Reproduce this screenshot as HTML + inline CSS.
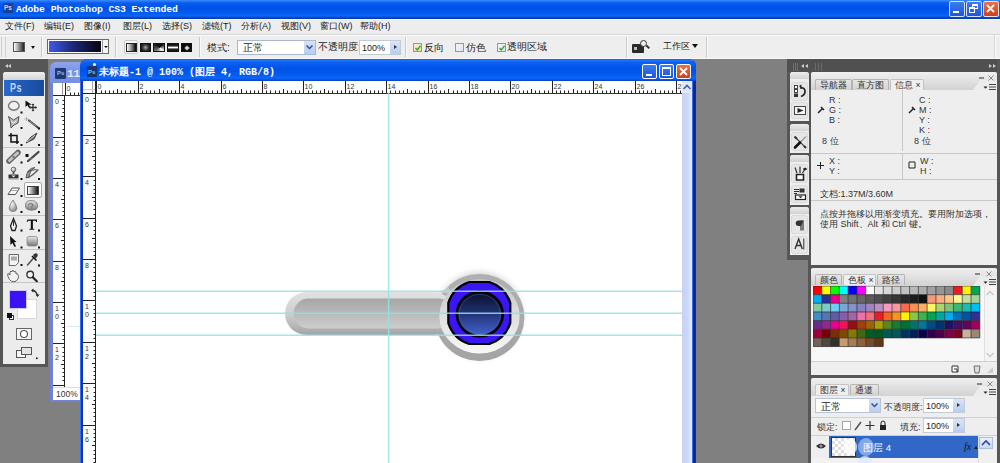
<!DOCTYPE html>
<html><head><meta charset="utf-8">
<style>
*{margin:0;padding:0;box-sizing:border-box}
html,body{width:1000px;height:463px;overflow:hidden;background:#808080;font-family:"Liberation Sans",sans-serif;font-size:10px;color:#222}
.a{position:absolute}
#title{left:0;top:0;width:1000px;height:19px;background:linear-gradient(#3d90ff 0,#2a7af8 1px,#0a5cf0 3px,#0052e6 8px,#0458ee 12px,#0a66f8 16px,#0850d8 17px,#0038a8 19px)}
#title .t{left:16px;top:4px;font:bold 9.8px "Liberation Mono",monospace;color:#fff;letter-spacing:-0.1px;white-space:pre}
#menu{left:0;top:19px;width:1000px;height:15px;background:#ededed;border-top:1px solid #f8f8ff}
#menu span{position:absolute;top:0;font-size:9px;color:#222;white-space:pre}
#opts{left:0;top:34px;width:1000px;height:25px;background:#eeeeee;border-top:1px solid #d6d6d6}
.sep{position:absolute;top:2px;width:2px;height:20px;border-left:1px solid #c8c8c8;border-right:1px solid #fafafa}

.tb{position:absolute;width:14px;height:14px}
.tri{position:absolute;width:0;height:0;border-left:2px solid transparent;border-top:2px solid transparent;border-right:2px solid #111;border-bottom:2px solid #111}

.rul text{font-family:"Liberation Sans",sans-serif;font-size:7px;fill:#333}

.tab{position:absolute;height:11px;border:1px solid #b4b4b4;border-bottom:none;border-radius:2px 2px 0 0;background:linear-gradient(#e6e6e6,#d2d2d2);font-size:8.6px;line-height:11px;color:#333;padding-left:4px;white-space:pre;overflow:hidden}
.tab.on{background:#efefef;border-color:#c4c4c4}
.pn{position:absolute;background:#eeeeee}
.ph{position:absolute;left:0;top:0;width:100%;height:18px;background:linear-gradient(#f0f0f0,#d2d2d2)}
.notch{position:absolute;right:0;top:8px;width:24px;height:10px;background:#ececec;clip-path:polygon(7px 0,100% 0,100% 100%,0 100%)}
.lbl{position:absolute;font-size:9px;color:#333;white-space:pre}
</style></head><body>
<!-- TITLE -->
<div id="title" class="a">
  <div class="a" style="left:3px;top:3px;width:10px;height:10px;background:#1d3f92;border-radius:1px"><span class="a" style="left:1px;top:1px;font:bold 6.5px 'Liberation Sans',sans-serif;color:#c4d6f8">Ps</span></div>
  <div class="a t">Adobe Photoshop CS3 Extended</div>
  <div class="a" style="left:949px;top:1px;width:16px;height:16px;border:1px solid #d4e0ff;border-radius:2px;background:linear-gradient(#3c7cf0,#1d55d8)"><div class="a" style="left:3px;top:9px;width:6px;height:2px;background:#fff"></div></div>
  <div class="a" style="left:966px;top:1px;width:16px;height:16px;border:1px solid #d4e0ff;border-radius:2px;background:linear-gradient(#3c7cf0,#1d55d8)"><div class="a" style="left:5px;top:2px;width:6px;height:5px;border:1px solid #fff;border-top-width:2px"></div><div class="a" style="left:2px;top:5px;width:6px;height:6px;border:1px solid #fff;border-top-width:2px;background:#2a62e0"></div></div>
  <div class="a" style="left:983px;top:1px;width:16px;height:16px;border:1px solid #f0e0e0;border-radius:2px;background:linear-gradient(#e8734e,#c9411f)"><svg class="a" style="left:2px;top:2px" width="9" height="9"><path d="M1 1L8 8M8 1L1 8" stroke="#fff" stroke-width="1.8"/></svg></div>
</div>
<!-- MENU -->
<div id="menu" class="a">
  <span style="left:5px">文件(F)</span>
  <span style="left:44px">编辑(E)</span>
  <span style="left:84px">图像(I)</span>
  <span style="left:123px">图层(L)</span>
  <span style="left:162px">选择(S)</span>
  <span style="left:202px">滤镜(T)</span>
  <span style="left:241px">分析(A)</span>
  <span style="left:281px">视图(V)</span>
  <span style="left:320px">窗口(W)</span>
  <span style="left:360px">帮助(H)</span>
</div>
<!-- OPTIONS -->
<div id="opts" class="a">
  <div class="a" style="left:0;top:0;width:1000px;height:1px;background:#fafafa"></div>
  <div class="a" style="left:994px;top:0;width:1px;height:24px;background:#d8d8d8"></div><div class="a" style="left:995px;top:0;width:1px;height:24px;background:#fafafa"></div>
  <div class="a" style="left:0;top:23px;width:1000px;height:1px;background:#f8f8f8"></div>
  <div class="a" style="left:1px;top:2px;width:5px;height:20px;border-left:1px solid #d0d0d0;border-right:1px solid #d0d0d0"></div>
  <div class="a" style="left:13px;top:7px;width:12px;height:10px;border:1px solid #555;background:linear-gradient(90deg,#fff,#222)"></div>
  <div class="a" style="left:31px;top:11px;width:0;height:0;border-left:2.5px solid transparent;border-right:2.5px solid transparent;border-top:3px solid #111"></div>
  <div class="sep" style="left:41px"></div>
  <div class="a" style="left:47px;top:4px;width:62px;height:15px;border:1px solid #6a6a6a;background:#fff">
    <div class="a" style="left:1px;top:1px;width:52px;height:11px;background:linear-gradient(90deg,#3c5ae8,#1a2570 50%,#05060e)"></div>
    <div class="a" style="left:54px;top:0;width:6px;height:13px;border-left:1px solid #999;background:#f4f4f4"><div class="a" style="left:1px;top:6px;width:0;height:0;border-left:2px solid transparent;border-right:2px solid transparent;border-top:2px solid #111"></div></div>
  </div>
  <div class="sep" style="left:115px"></div>
  <div class="a" style="left:124px;top:5px;width:14px;height:14px;border:1px solid #c8c8c8;border-radius:2px;background:#f8f8f8"></div>
  <div class="a" style="left:126px;top:8px;width:11px;height:9px;border:1px solid #222;background:linear-gradient(90deg,#fff,#888 50%,#000)"></div>
  <div class="a" style="left:140px;top:8px;width:11px;height:9px;border:1px solid #111;background:radial-gradient(circle,#aaa 0,#444 45%,#0a0a0a 90%)"></div>
  <div class="a" style="left:153px;top:8px;width:12px;height:9px;border:1px solid #111;background:conic-gradient(from 135deg at 55% 50%,#fff,#777 90deg,#111 180deg,#111 270deg,#fff)"></div>
  <div class="a" style="left:167px;top:8px;width:12px;height:9px;border:1px solid #111;background:linear-gradient(#111 0,#222 25%,#fff 50%,#222 75%,#111 100%)"></div>
  <div class="a" style="left:181px;top:8px;width:11px;height:9px;border:1px solid #111;background:#0a0a0a"><div class="a" style="left:3px;top:1.5px;width:4px;height:4px;transform:rotate(45deg);background:radial-gradient(circle,#fff,#777)"></div></div>
  <div class="sep" style="left:199px"></div>
  <span class="a" style="left:207px;top:6px;font-size:10px">模式:</span>
  <div class="a" style="left:237px;top:5px;width:79px;height:15px;border:1px solid #a9b8d2;background:#fff">
    <span class="a" style="left:5px;top:1px;font-size:9.5px">正常</span>
    <div class="a" style="right:0;top:0;width:11px;height:13px;background:linear-gradient(#d6e2f8,#b8cdf2)"><svg class="a" style="left:2px;top:4px" width="7" height="5"><path d="M0.5 0.5L3.5 3.5L6.5 0.5" stroke="#3a4f8a" stroke-width="1.5" fill="none"/></svg></div>
  </div>
  <span class="a" style="left:318px;top:6px;font-size:9.5px">不透明度:</span>
  <div class="a" style="left:359px;top:5px;width:42px;height:15px;border:1px solid #c3cad8;background:#fff">
    <span class="a" style="left:2px;top:2px;font-size:9px">100%</span>
    <div class="a" style="right:0;top:0;width:10px;height:13px;background:linear-gradient(#d9e4f8,#b9cdf0)"><div class="a" style="left:4px;top:4px;width:0;height:0;border-top:2.5px solid transparent;border-bottom:2.5px solid transparent;border-left:3px solid #333"></div></div>
  </div>
  <div class="sep" style="left:405px"></div>
  <div class="a" style="left:413px;top:8px;width:9px;height:9px;border:1px solid #8a9aae;background:linear-gradient(135deg,#f8f0d8,#e8d898)"><svg class="a" style="left:0;top:0" width="8" height="8"><path d="M1.5 4L3.3 6L6.5 1.8" stroke="#2aa52a" stroke-width="1.3" fill="none"/></svg></div>
  <span class="a" style="left:424px;top:6px;font-size:10px">反向</span>
  <div class="a" style="left:455px;top:8px;width:9px;height:9px;border:1px solid #8a9aae;background:linear-gradient(135deg,#f2f4f8,#dfe4ee)"></div>
  <span class="a" style="left:466px;top:6px;font-size:10px">仿色</span>
  <div class="a" style="left:497px;top:8px;width:9px;height:9px;border:1px solid #8a9aae;background:linear-gradient(135deg,#f2f4f8,#dfe4ee)"><svg class="a" style="left:0;top:0" width="8" height="8"><path d="M1.5 4L3.3 6L6.5 1.8" stroke="#2aa52a" stroke-width="1.3" fill="none"/></svg></div>
  <span class="a" style="left:507px;top:6px;font-size:9.6px">透明区域</span>
  <div class="sep" style="left:626px"></div>
  <div class="a" style="left:632px;top:9px;width:12px;height:9px;background:#2a2a2a;border-radius:1px"><div class="a" style="left:2px;top:3px;width:3px;height:3px;background:#bbb"></div></div>
  <div class="a" style="left:640px;top:5px;width:7px;height:7px;border:1.5px solid #333;border-radius:50%;background:#eee"></div>
  <div class="a" style="left:646px;top:11px;width:4px;height:1.5px;background:#333;transform:rotate(45deg)"></div>
  <span class="a" style="left:663px;top:5px;font-size:9px">工作区</span>
  <div class="a" style="left:692px;top:9px;width:0;height:0;border-left:3.5px solid transparent;border-right:3.5px solid transparent;border-top:4px solid #111"></div>
  <div class="sep" style="left:706px"></div>
</div>

<!-- LEFT DOCK -->
<div class="a" style="left:0;top:59px;width:48px;height:308px;background:#565656"></div>
<div class="a" style="left:5px;top:64px;width:0;height:0;border-top:2.5px solid transparent;border-bottom:2.5px solid transparent;border-right:3px solid #ccc"></div>
<div class="a" style="left:8px;top:64px;width:0;height:0;border-top:2.5px solid transparent;border-bottom:2.5px solid transparent;border-right:3px solid #ccc"></div>
<div class="a" style="left:3px;top:72px;width:42px;height:292px;background:#ececec;border-radius:3px 3px 0 0"></div>
<div class="a" style="left:3px;top:72px;width:42px;height:8px;background:linear-gradient(#f0f0f0,#d4d4d4);border-radius:3px 3px 0 0"></div>
<div class="a" style="left:4px;top:80px;width:40px;height:16px;background:linear-gradient(90deg,#2b6acb,#1d55ae 60%,#1a4c9c)">
  <span class="a" style="left:5.5px;top:0.5px;font:bold 12px 'Liberation Sans',sans-serif;color:#bcd6f2;transform:scaleX(0.75);transform-origin:0 0;letter-spacing:0.6px">Ps</span>
</div>
<!-- tool separators -->
<div class="a" style="left:3px;top:147px;width:42px;height:1px;background:#c4c4c4"></div>
<div class="a" style="left:3px;top:215px;width:42px;height:1px;background:#c4c4c4"></div>
<div class="a" style="left:3px;top:249px;width:42px;height:1px;background:#c4c4c4"></div>
<div class="a" style="left:3px;top:282px;width:42px;height:1px;background:#c4c4c4"></div>
<svg class="a" style="left:0;top:96px" width="48" height="268" viewBox="0 96 48 268">
 <defs>
  <linearGradient id="tg1" x1="0" y1="0" x2="1" y2="1"><stop offset="0" stop-color="#fff"/><stop offset="1" stop-color="#555"/></linearGradient>
  <linearGradient id="tg2" x1="0" y1="0" x2="0" y2="1"><stop offset="0" stop-color="#e8e8e8"/><stop offset="1" stop-color="#777"/></linearGradient>
  <radialGradient id="tg3" cx="0.35" cy="0.35" r="0.7"><stop offset="0" stop-color="#fafafa"/><stop offset="1" stop-color="#8a8a8a"/></radialGradient>
 </defs>
 <!-- ellipse marquee -->
 <ellipse cx="13.8" cy="105.8" rx="5.3" ry="4.4" fill="#f0f0f0" stroke="#777" stroke-width="1.4"/>
 <!-- move -->
 <path d="M25.5 100.5 L25.5 107 L27.5 105.3 L29 108 L30.3 107.3 L29 104.7 L31.8 104.7Z" fill="#111"/>
 <path d="M33 104v7M29.5 107.5h7" stroke="#333" stroke-width="1.3"/>
 <path d="M33 103.5l-1.5 1.5h3zM33 111.5l-1.5-1.5h3zM29 107.5l1.5-1.5v3zM37 107.5l-1.5-1.5v3z" fill="#333"/>
 <!-- lasso -->
 <path d="M8.5 116.5 L13.5 120 L19 116.5 L18 123 L14 125 L11 128 L10.5 123 Z" fill="#b8b8b8" stroke="#555" stroke-width="1"/>
 <path d="M11 121.5 L13.5 123 L16.5 121" stroke="#eee" stroke-width="1" fill="none"/>
 <!-- magic wand -->
 <path d="M29 120.5 L38.5 128" stroke="#444" stroke-width="2.2" stroke-linecap="round"/>
 <path d="M29.5 121 L36 126" stroke="#aaa" stroke-width="0.8"/>
 <path d="M26.5 117v4M24.5 119h4" stroke="#aaa" stroke-width="0.9"/>
 <!-- crop -->
 <path d="M11 133v9h8M8.5 135.5h8.5v8.5" stroke="#111" stroke-width="1.5" fill="none"/>
 <!-- slice -->
 <path d="M26 143 L31 137 L37 133 L34 139 Z" fill="#777" stroke="#333" stroke-width="0.9"/>
 <path d="M27 142 L35 135" stroke="#ddd" stroke-width="0.8"/>
 <!-- healing -->
 <path d="M9 161 L18 152.5" stroke="#666" stroke-width="5.5" stroke-linecap="round"/>
 <path d="M9.5 160.5 L17.5 153" stroke="#c4c4c4" stroke-width="3" stroke-linecap="round"/>
 <circle cx="13.5" cy="157" r="1.2" fill="#777"/>
 <!-- brush -->
 <rect x="25.5" y="154" width="3" height="3" fill="#111"/>
 <path d="M28 161 Q33 157 38.5 152" stroke="#444" stroke-width="2.2" fill="none" stroke-linecap="round"/>
 <path d="M29 158.5 Q31 160 33 158" stroke="#888" stroke-width="1" fill="none"/>
 <!-- stamp -->
 <circle cx="13.5" cy="169.5" r="2.3" fill="url(#tg3)" stroke="#555" stroke-width="0.8"/>
 <path d="M12.5 171.5h2v2.5h-2z" fill="#555"/>
 <path d="M8.5 174.5h10v3.5h-10z" fill="#333"/>
 <path d="M8.5 178h10v1.5h-10z" fill="#999"/>
 <path d="M11.5 175.5l2 2l2-2z" fill="#eee"/>
 <!-- history brush -->
 <path d="M26 178 Q27 168 35 167.5 Q30 170 29 177 Z" fill="#999" stroke="#444" stroke-width="0.8"/>
 <path d="M27.5 172 Q33 169 38 170 Q33 175 28 178" stroke="#555" stroke-width="1.1" fill="none"/>
 <!-- eraser -->
 <path d="M8 194.5 L12 188 H19.5 L15.5 194.5 Z" fill="#f6f6f6" stroke="#555" stroke-width="1"/>
 <path d="M8.5 194 L11 190.5 H18" stroke="#999" stroke-width="0.8" fill="none"/>
 <!-- blur drop -->
 <path d="M13 200 Q9 206 9.2 208.5 Q9.5 211.5 13 211.5 Q16.5 211.5 16.8 208.5 Q17 206 13 200Z" fill="url(#tg3)" stroke="#777" stroke-width="0.8"/>
 <!-- dodge / smudge cloud -->
 <path d="M25.5 206 Q25 201 30 200.5 Q35 200 37 203 Q39 207 36 209.5 Q31 211 27.5 209.5 Q25.5 208.5 25.5 206Z" fill="url(#tg2)" stroke="#777" stroke-width="0.8"/>
 <path d="M28 205 Q30 202.5 32.5 204 Q34 206.5 31 207" stroke="#666" stroke-width="0.9" fill="none"/>
 <!-- pen -->
 <path d="M13.5 218.5 L10.5 226 L12 230.5 H15 L16.5 226 Z" fill="#eee" stroke="#222" stroke-width="1.3"/>
 <path d="M13.5 221v5" stroke="#222" stroke-width="0.9"/>
 <!-- type T -->
 <path d="M27.5 219.5h9.5v2.5h-0.8l-0.7-1.3h-2.6v8h1.3v1h-4.7v-1h1.3v-8h-2.6l-0.7 1.3h-0.8z" fill="#111"/>
 <!-- path select -->
 <path d="M10 236 L10.5 245 L12.5 243 L14.5 247 L16 246.2 L14 242.3 L16.5 242 Z" fill="#111"/>
 <!-- shape -->
 <rect x="27" y="236.5" width="10.5" height="9.5" rx="2" fill="url(#tg2)" stroke="#888" stroke-width="0.8"/>
 <!-- notes -->
 <path d="M9.2 254.5 H18.5 V262.5 L15.5 265.5 H9.2 Z" fill="#f4f4f4" stroke="#666" stroke-width="1"/>
 <path d="M11 256.5h6v4h-6z" fill="#aaa"/>
 <!-- eyedropper -->
 <path d="M27.5 265 L34 257.5" stroke="#555" stroke-width="1.6" stroke-linecap="round"/>
 <path d="M33 255 Q35.5 252 37.5 254 Q38.5 256 35.5 258.5 Z" fill="#333"/>
 <path d="M32 256 L36.5 260.5" stroke="#111" stroke-width="1.6"/>
 <!-- hand -->
 <path d="M9.5 279.5 Q7 275.5 7.8 273.8 Q8.8 273 10 275 V271.8 Q11 270.5 12 271.8 V271 Q13 270 14 271 V272 Q15 271 16 272 V274 Q17 273.3 18 274.5 Q19 276 18 279 Q16.5 282 13 281.8 Q11 281.5 9.5 279.5Z" fill="#f2f2f2" stroke="#555" stroke-width="0.9"/>
 <!-- zoom -->
 <circle cx="30.2" cy="274.6" r="3.3" fill="#f4f4f4" stroke="#333" stroke-width="1.4"/>
 <path d="M32.8 277.2 L36.8 281.2" stroke="#222" stroke-width="2.2" stroke-linecap="round"/>
 <!-- quick mask & screen mode -->
 <rect x="16.5" y="328.5" width="15" height="11" fill="#f6f6f6" stroke="#666" stroke-width="1"/>
 <circle cx="24" cy="334" r="3.5" fill="#fff" stroke="#555" stroke-width="1.1"/>
 <rect x="16.5" y="350.5" width="9" height="7" fill="#f8f8f8" stroke="#555" stroke-width="1"/>
 <rect x="21.5" y="347.5" width="10" height="7" fill="#e4e4e4" stroke="#555" stroke-width="1"/>
 <g fill="#111">
  <rect x="20.5" y="111.5" width="2" height="2"/>
  <rect x="20.5" y="127" width="2" height="2"/><rect x="38" y="127.5" width="2" height="2"/>
  <rect x="20.5" y="144" width="2" height="2"/><rect x="38" y="144" width="2" height="2"/>
  <rect x="20.5" y="161.5" width="2" height="2"/><rect x="38" y="161.5" width="2" height="2"/>
  <rect x="20.5" y="178" width="2" height="2"/><rect x="38" y="178" width="2" height="2"/>
  <rect x="20.5" y="195" width="2" height="2"/><rect x="38.5" y="195" width="2" height="2"/>
  <rect x="20.5" y="211" width="2" height="2"/><rect x="38" y="211" width="2" height="2"/>
  <rect x="20.5" y="229.5" width="2" height="2"/><rect x="38" y="229.5" width="2" height="2"/>
  <rect x="20.5" y="246.5" width="2" height="2"/><rect x="38" y="246.5" width="2" height="2"/>
  <rect x="20.5" y="264" width="2" height="2"/><rect x="38" y="264.5" width="2" height="2"/>
  <rect x="36" y="357.5" width="1.6" height="1.6"/>
 </g>
</svg>
<!-- gradient tool selected -->
<div class="a" style="left:24px;top:182px;width:18px;height:16px;border:1px solid #a8a8a8;border-radius:2px;background:#fbfbfb"></div>
<div class="a" style="left:27px;top:186px;width:12px;height:9px;border:1px solid #444;background:linear-gradient(90deg,#fff,#111)"></div>
<!-- colors -->
<div class="a" style="left:17px;top:299px;width:20px;height:20px;background:#fff;border:1px solid #d8d8d8"></div>
<div class="a" style="left:9px;top:290px;width:18px;height:19px;background:#3b12f2;border:1px solid #cfc8ff"></div>
<div class="a" style="left:9px;top:315px;width:5px;height:5px;background:#fff;border:1px solid #333"></div>
<div class="a" style="left:7px;top:313px;width:5px;height:5px;background:#111"></div>
<svg class="a" style="left:30px;top:288px" width="10" height="10"><path d="M2.5 2.5 Q6 2.5 7.5 7.5" stroke="#333" stroke-width="1.3" fill="none"/><path d="M1 2.5 L3.5 0.5 V4.5Z M7.5 9 L5.5 6.5 H9.5Z" fill="#222"/></svg>

<!-- BACK WINDOW -->
<div class="a" style="left:50px;top:62px;width:39px;height:340px;background:#7282d8;border-radius:6px 6px 0 0"></div>
<div class="a" style="left:50px;top:62px;width:39px;height:21px;background:linear-gradient(#8ea4ec,#7d95e4 40%,#7890e2);border-radius:6px 6px 0 0"></div>
<div class="a" style="left:55px;top:68px;width:11px;height:11px;background:#1d3a78;border-radius:1px"><span class="a" style="left:2px;top:2px;font:bold 6px 'Liberation Sans';color:#9bb8e8">Ps</span></div>
<span class="a" style="left:67px;top:68px;font:bold 11px 'Liberation Mono',monospace;color:#dfe8ff">11</span>
<div class="a" style="left:53px;top:83px;width:30px;height:304px;background:#fff"></div>
<svg class="a rul" style="left:65px;top:83px" width="16" height="12"><path d="M0.5 0V12M5.5 9.5V12M9.5 9.5V12M13.5 9.5V12" stroke="#222" stroke-width="1"/><text x="1.5" y="8">0</text></svg>
<div class="a" style="left:53px;top:95px;width:28px;height:1px;background:#333"></div>
<div class="a" style="left:62px;top:83px;width:1px;height:12px;background:#999"></div>
<svg class="a rul" style="left:53px;top:95px" width="12" height="292"><path d="M0 0.5H12M9.5 5.5H12M9.5 9.5H12M9.5 13.5H12M9.5 17.5H12M8 21.5H12M9.5 25.5H12M9.5 29.5H12M9.5 34.5H12M9.5 38.5H12M0 42.5H12M9.5 46.5H12M9.5 50.5H12M9.5 54.5H12M9.5 58.5H12M8 62.5H12M9.5 67.5H12M9.5 71.5H12M9.5 75.5H12M9.5 79.5H12M0 83.5H12M9.5 87.5H12M9.5 91.5H12M9.5 95.5H12M9.5 100.5H12M8 104.5H12M9.5 108.5H12M9.5 112.5H12M9.5 116.5H12M9.5 120.5H12M0 124.5H12M9.5 129.5H12M9.5 133.5H12M9.5 137.5H12M9.5 141.5H12M8 145.5H12M9.5 149.5H12M9.5 153.5H12M9.5 157.5H12M9.5 162.5H12M0 166.5H12M9.5 170.5H12M9.5 174.5H12M9.5 178.5H12M9.5 182.5H12M8 186.5H12M9.5 190.5H12M9.5 195.5H12M9.5 199.5H12M9.5 203.5H12M0 207.5H12M9.5 211.5H12M9.5 215.5H12M9.5 219.5H12M9.5 224.5H12M8 228.5H12M9.5 232.5H12M9.5 236.5H12M9.5 240.5H12M9.5 244.5H12M0 248.5H12M9.5 252.5H12M9.5 257.5H12M9.5 261.5H12M9.5 265.5H12M8 269.5H12M9.5 273.5H12M9.5 277.5H12M9.5 281.5H12M9.5 285.5H12M0 290.5H12" stroke="#222" stroke-width="1"/><text x="2" y="8.5">0</text><text x="2" y="50.5">2</text><text x="2" y="91.5">4</text><text x="2" y="132.5">6</text><text x="2" y="174.5">8</text><text x="2" y="215.5">1</text><text x="2" y="223.5">0</text><text x="2" y="256.5">1</text><text x="2" y="264.5">2</text><text x="2" y="298.5">1</text><text x="2" y="306.5">4</text></svg>
<div class="a" style="left:64px;top:95px;width:1px;height:292px;background:#222"></div>
<div class="a" style="left:53px;top:387px;width:30px;height:13px;background:#fff;border-top:1px solid #ddd"></div>
<span class="a" style="left:56px;top:389px;font-size:8.5px;color:#333">100%</span>

<!-- FRONT WINDOW -->
<div class="a" style="left:80px;top:59px;width:616px;height:420px;background:linear-gradient(90deg,#3a6ef0 0,#3a6ef0 1px,#0a36c8 1px,#0a36c8 3px,#6a9cf8 3px,#6a9cf8 4px,#0a40d8 4px,#0a40d8 611px,#d8f0ff 611px,#d8f0ff 612px,#3a70e8 612px,#3a70e8 613px,#0828a8 613px,#00208f 615px,#2a3a80 616px);border-radius:7px 7px 0 0"></div>
<div class="a" style="left:80px;top:59px;width:616px;height:22px;background:linear-gradient(#1a4cc8 0,#2a78f8 1px,#0a62f4 3px,#0052e6 10px,#0458ee 15px,#0a66f8 19px,#0850e0 21px,#0a3ab8 22px);border-radius:7px 7px 0 0"></div>
<div class="a" style="left:87px;top:66px;width:10px;height:11px;background:#17366e;border-radius:1px"><span class="a" style="left:1px;top:3px;font:bold 6px 'Liberation Sans';color:#9bb8e8">Ps</span></div>
<div class="a" style="left:93px;top:63px;width:3px;height:3px;background:#fff;border-radius:50%"></div>
<span class="a" style="left:99px;top:65px;font:bold 10px 'Liberation Mono',monospace;color:#fff;white-space:pre">未标题-1 @ 100% (图层 4, RGB/8)</span>
<div class="a" style="left:642px;top:64px;width:15px;height:15px;border:1px solid #fff;border-radius:2px;background:linear-gradient(#3c7cf0,#1d55d8)"><div class="a" style="left:3px;top:9px;width:6px;height:2px;background:#fff"></div></div>
<div class="a" style="left:659px;top:64px;width:15px;height:15px;border:1px solid #fff;border-radius:2px;background:linear-gradient(#3c7cf0,#1d55d8)"><div class="a" style="left:2px;top:2px;width:9px;height:9px;border:1px solid #fff;border-top-width:2px"></div></div>
<div class="a" style="left:676px;top:64px;width:15px;height:15px;border:1px solid #fff;border-radius:2px;background:linear-gradient(#e8734e,#c9411f)"><svg class="a" style="left:2px;top:2px" width="9" height="9"><path d="M1 1L8 8M8 1L1 8" stroke="#fff" stroke-width="1.8"/></svg></div>
<div class="a" style="left:83px;top:81px;width:599px;height:382px;background:#fff"></div>
<svg class="a rul" style="left:96px;top:81px" width="586" height="12"><path d="M0.5 0V12M5.5 9.5V12M9.5 9.5V12M13.5 9.5V12M17.5 9.5V12M21.5 8V12M25.5 9.5V12M29.5 9.5V12M34.5 9.5V12M38.5 9.5V12M42.5 0V12M46.5 9.5V12M50.5 9.5V12M54.5 9.5V12M58.5 9.5V12M63.5 8V12M67.5 9.5V12M71.5 9.5V12M75.5 9.5V12M79.5 9.5V12M83.5 0V12M87.5 9.5V12M92.5 9.5V12M96.5 9.5V12M100.5 9.5V12M104.5 8V12M108.5 9.5V12M112.5 9.5V12M116.5 9.5V12M121.5 9.5V12M125.5 0V12M129.5 9.5V12M133.5 9.5V12M137.5 9.5V12M141.5 9.5V12M145.5 8V12M150.5 9.5V12M154.5 9.5V12M158.5 9.5V12M162.5 9.5V12M166.5 0V12M170.5 9.5V12M174.5 9.5V12M179.5 9.5V12M183.5 9.5V12M187.5 8V12M191.5 9.5V12M195.5 9.5V12M199.5 9.5V12M203.5 9.5V12M207.5 0V12M212.5 9.5V12M216.5 9.5V12M220.5 9.5V12M224.5 9.5V12M228.5 8V12M232.5 9.5V12M236.5 9.5V12M241.5 9.5V12M245.5 9.5V12M249.5 0V12M253.5 9.5V12M257.5 9.5V12M261.5 9.5V12M265.5 9.5V12M270.5 8V12M274.5 9.5V12M278.5 9.5V12M282.5 9.5V12M286.5 9.5V12M290.5 0V12M294.5 9.5V12M299.5 9.5V12M303.5 9.5V12M307.5 9.5V12M311.5 8V12M315.5 9.5V12M319.5 9.5V12M323.5 9.5V12M328.5 9.5V12M332.5 0V12M336.5 9.5V12M340.5 9.5V12M344.5 9.5V12M348.5 9.5V12M352.5 8V12M357.5 9.5V12M361.5 9.5V12M365.5 9.5V12M369.5 9.5V12M373.5 0V12M377.5 9.5V12M381.5 9.5V12M386.5 9.5V12M390.5 9.5V12M394.5 8V12M398.5 9.5V12M402.5 9.5V12M406.5 9.5V12M410.5 9.5V12M414.5 0V12M419.5 9.5V12M423.5 9.5V12M427.5 9.5V12M431.5 9.5V12M435.5 8V12M439.5 9.5V12M443.5 9.5V12M448.5 9.5V12M452.5 9.5V12M456.5 0V12M460.5 9.5V12M464.5 9.5V12M468.5 9.5V12M472.5 9.5V12M477.5 8V12M481.5 9.5V12M485.5 9.5V12M489.5 9.5V12M493.5 9.5V12M497.5 0V12M501.5 9.5V12M506.5 9.5V12M510.5 9.5V12M514.5 9.5V12M518.5 8V12M522.5 9.5V12M526.5 9.5V12M530.5 9.5V12M535.5 9.5V12M539.5 0V12M543.5 9.5V12M547.5 9.5V12M551.5 9.5V12M555.5 9.5V12M559.5 8V12M564.5 9.5V12M568.5 9.5V12M572.5 9.5V12M576.5 9.5V12M580.5 0V12M584.5 9.5V12" stroke="#222" stroke-width="1"/><text x="1.5" y="8">0</text><text x="43.5" y="8">2</text><text x="84.5" y="8">4</text><text x="126.5" y="8">6</text><text x="167.5" y="8">8</text><text x="208.5" y="8">10</text><text x="250.5" y="8">12</text><text x="291.5" y="8">14</text><text x="333.5" y="8">16</text><text x="374.5" y="8">18</text><text x="415.5" y="8">20</text><text x="457.5" y="8">22</text><text x="498.5" y="8">24</text><text x="540.5" y="8">26</text><text x="581.5" y="8">28</text></svg>
<div class="a" style="left:83px;top:93px;width:599px;height:1px;background:#333"></div>
<div class="a" style="left:92px;top:81px;width:1px;height:12px;background:#aaa"></div>
<div class="a" style="left:83px;top:89px;width:13px;height:1px;background:#ccc"></div>
<svg class="a rul" style="left:83px;top:93px" width="13" height="371"><path d="M0 0.5H13M10.5 5.5H13M10.5 9.5H13M10.5 13.5H13M10.5 17.5H13M9 21.5H13M10.5 25.5H13M10.5 29.5H13M10.5 34.5H13M10.5 38.5H13M0 42.5H13M10.5 46.5H13M10.5 50.5H13M10.5 54.5H13M10.5 58.5H13M9 63.5H13M10.5 67.5H13M10.5 71.5H13M10.5 75.5H13M10.5 79.5H13M0 83.5H13M10.5 87.5H13M10.5 92.5H13M10.5 96.5H13M10.5 100.5H13M9 104.5H13M10.5 108.5H13M10.5 112.5H13M10.5 116.5H13M10.5 121.5H13M0 125.5H13M10.5 129.5H13M10.5 133.5H13M10.5 137.5H13M10.5 141.5H13M9 145.5H13M10.5 150.5H13M10.5 154.5H13M10.5 158.5H13M10.5 162.5H13M0 166.5H13M10.5 170.5H13M10.5 174.5H13M10.5 179.5H13M10.5 183.5H13M9 187.5H13M10.5 191.5H13M10.5 195.5H13M10.5 199.5H13M10.5 203.5H13M0 207.5H13M10.5 212.5H13M10.5 216.5H13M10.5 220.5H13M10.5 224.5H13M9 228.5H13M10.5 232.5H13M10.5 236.5H13M10.5 241.5H13M10.5 245.5H13M0 249.5H13M10.5 253.5H13M10.5 257.5H13M10.5 261.5H13M10.5 265.5H13M9 270.5H13M10.5 274.5H13M10.5 278.5H13M10.5 282.5H13M10.5 286.5H13M0 290.5H13M10.5 294.5H13M10.5 299.5H13M10.5 303.5H13M10.5 307.5H13M9 311.5H13M10.5 315.5H13M10.5 319.5H13M10.5 323.5H13M10.5 328.5H13M0 332.5H13M10.5 336.5H13M10.5 340.5H13M10.5 344.5H13M10.5 348.5H13M9 352.5H13M10.5 357.5H13M10.5 361.5H13M10.5 365.5H13M10.5 369.5H13" stroke="#222" stroke-width="1"/><text x="2" y="8.5">0</text><text x="2" y="50.5">2</text><text x="2" y="91.5">4</text><text x="2" y="133.5">6</text><text x="2" y="174.5">8</text><text x="2" y="215.5">1</text><text x="2" y="223.5">0</text><text x="2" y="257.5">1</text><text x="2" y="265.5">2</text><text x="2" y="298.5">1</text><text x="2" y="306.5">4</text><text x="2" y="340.5">1</text><text x="2" y="348.5">6</text></svg>
<div class="a" style="left:95px;top:81px;width:1px;height:382px;background:#222"></div>
<div class="a" style="left:682px;top:81px;width:10px;height:382px;background:linear-gradient(90deg,#c6d2f4,#cbd8f8 60%,#e4ecff)"></div>
<div class="a" style="left:682px;top:81px;width:10px;height:12px;background:#dfe8fc"></div>
<svg class="a" style="left:682px;top:81px" width="10" height="12"><path d="M1.5 8L5 4.5L8.5 8" stroke="#4a5e9a" stroke-width="1.6" fill="none"/></svg>


<!-- CANVAS CONTENT -->
<svg class="a" style="left:96px;top:93px" width="586" height="370" viewBox="96 93 586 370">
 <defs>
  <linearGradient id="bo" x1="0" y1="0" x2="0" y2="1"><stop offset="0" stop-color="#e2e2e2"/><stop offset="0.5" stop-color="#cfcfcf"/><stop offset="1" stop-color="#a4a4a4"/></linearGradient>
  <linearGradient id="bi" x1="0" y1="0" x2="0" y2="1"><stop offset="0" stop-color="#a6a6a6"/><stop offset="1" stop-color="#cdcdcd"/></linearGradient>
  <linearGradient id="co" x1="0" y1="0" x2="0" y2="1"><stop offset="0" stop-color="#b0b0b0"/><stop offset="1" stop-color="#a4a4a4"/></linearGradient>
  <linearGradient id="ci" x1="0" y1="0" x2="0" y2="1"><stop offset="0" stop-color="#c2c2c2"/><stop offset="0.5" stop-color="#dedede"/><stop offset="1" stop-color="#f8f8f8"/></linearGradient>
  <linearGradient id="nv" x1="0" y1="0" x2="0" y2="1"><stop offset="0" stop-color="#0b0d26"/><stop offset="0.45" stop-color="#1f3070"/><stop offset="1" stop-color="#4266d2"/></linearGradient>
  <radialGradient id="glow" cx="0.5" cy="0.5" r="0.5"><stop offset="0.8" stop-color="#d8d8d8"/><stop offset="1" stop-color="#fff" stop-opacity="0"/></radialGradient>
 </defs>
 <circle cx="479.5" cy="315" r="50" fill="url(#glow)"/>
 <ellipse cx="479.6" cy="317.5" rx="44.8" ry="43.6" fill="url(#co)"/>
 <rect x="285" y="292" width="170" height="43" rx="21.5" fill="url(#bo)"/>
 <path d="M436 292 Q444 292 448 286.5 L452 294 Z" fill="#c9c9c9"/>
 <path d="M436 335 Q444 335 448 343.5 L452 333 Z" fill="#a8a8a8"/>
 <rect x="293.5" y="298.5" width="160" height="30" rx="15" fill="url(#bi)"/>
 <ellipse cx="479.5" cy="316.2" rx="40.2" ry="37.3" fill="url(#ci)"/>
 <path d="M469.21 282.00H489.39A32.6 32.6 0 0 1 510.30 302.91V323.09A32.6 32.6 0 0 1 489.39 344.00H469.21A32.6 32.6 0 0 1 448.30 323.09V302.91A32.6 32.6 0 0 1 469.21 282.00Z" fill="#3a16f2" stroke="#000" stroke-width="2.2"/>
 <ellipse cx="479.8" cy="314.1" rx="22.9" ry="22.2" fill="url(#nv)" stroke="#000" stroke-width="2.6"/>
 <ellipse cx="479.8" cy="314.3" rx="20.6" ry="19.9" fill="none" stroke="#5a6aa8" stroke-width="0.8" opacity="0.5"/>
 <g stroke="#8fe4e8" stroke-width="1.5" opacity="0.85">
  <path d="M96 291.2H682M96 313.3H682M96 335.3H682M388.6 93V463"/>
 </g>
</svg>
<div class="a" style="left:67px;top:326px;width:13px;height:1px;background:#cdeff2"></div>
<!-- RIGHT DOCK -->
<div class="a" style="left:787px;top:59px;width:24px;height:201px;background:#565656"></div>
<div class="a" style="left:808px;top:59px;width:3px;height:404px;background:#565656"></div>
<div class="a" style="left:787px;top:59px;width:213px;height:13px;background:#505050"></div>
<div class="a" style="left:997px;top:59px;width:3px;height:404px;background:#565656"></div>
<div class="a" style="left:793px;top:63px;width:5px;height:8px;background:repeating-linear-gradient(90deg,#707070 0 1px,transparent 1px 2px)"></div>
<div class="a" style="left:815px;top:63px;width:7px;height:8px;background:repeating-linear-gradient(90deg,#6a6a6a 0 1px,transparent 1px 3px)"></div>
<div class="a" style="left:801px;top:64px;width:0;height:0;border-top:2.5px solid transparent;border-bottom:2.5px solid transparent;border-right:3px solid #ccc"></div>
<div class="a" style="left:805px;top:64px;width:0;height:0;border-top:2.5px solid transparent;border-bottom:2.5px solid transparent;border-right:3px solid #ccc"></div>
<div class="a" style="left:989px;top:64px;width:0;height:0;border-top:2.5px solid transparent;border-bottom:2.5px solid transparent;border-left:3px solid #ccc"></div>
<div class="a" style="left:993px;top:64px;width:0;height:0;border-top:2.5px solid transparent;border-bottom:2.5px solid transparent;border-left:3px solid #ccc"></div>
<!-- icon strip -->
<div class="pn" style="left:790px;top:72px;width:19px;height:49px;border-radius:3px 3px 0 0"><div class="a" style="left:0;top:0;width:19px;height:7px;background:linear-gradient(#ececec,#d2d2d2);border-radius:3px 3px 0 0"></div></div>
<div class="pn" style="left:790px;top:124px;width:19px;height:29px;border-radius:3px 3px 0 0"><div class="a" style="left:0;top:0;width:19px;height:7px;background:linear-gradient(#ececec,#d2d2d2);border-radius:3px 3px 0 0"></div></div>
<div class="pn" style="left:790px;top:155px;width:19px;height:50px;border-radius:3px 3px 0 0"><div class="a" style="left:0;top:0;width:19px;height:7px;background:linear-gradient(#ececec,#d2d2d2);border-radius:3px 3px 0 0"></div></div>
<div class="pn" style="left:790px;top:207px;width:19px;height:48px;border-radius:3px 3px 0 0"><div class="a" style="left:0;top:0;width:19px;height:7px;background:linear-gradient(#ececec,#d2d2d2);border-radius:3px 3px 0 0"></div></div>
<svg class="a" style="left:786px;top:72px" width="26" height="190" viewBox="786 72 26 190">
 <g fill="#e6e6e6" stroke="#d6d6d6" stroke-width="0.8">
  <rect x="791.5" y="82.5" width="16" height="18" rx="2"/>
  <rect x="791.5" y="102.5" width="16" height="16" rx="2"/>
  <rect x="791.5" y="132.5" width="16" height="18" rx="2"/>
  <rect x="791.5" y="164.5" width="16" height="18" rx="2"/>
  <rect x="791.5" y="185.5" width="16" height="17" rx="2"/>
  <rect x="791.5" y="215.5" width="16" height="18" rx="2"/>
  <rect x="791.5" y="236.5" width="16" height="17" rx="2"/>
 </g>
 <!-- history -->
 <rect x="794.5" y="85.5" width="3" height="3" fill="#fff" stroke="#333" stroke-width="0.9"/>
 <rect x="794.5" y="89.5" width="3" height="3" fill="#fff" stroke="#333" stroke-width="0.9"/>
 <rect x="794" y="93.5" width="4" height="3.5" fill="#333"/>
 <path d="M800 88 Q805 87 805 91.5 Q805 95 801 96.5" stroke="#222" stroke-width="1.7" fill="none"/>
 <path d="M799 86 l2.5 -1.5 v4z" fill="#222"/>
 <!-- actions -->
 <rect x="794.5" y="106.5" width="11" height="8" fill="#f6f6f6" stroke="#444" stroke-width="1"/>
 <path d="M797.5 108 L803.5 110.5 L797.5 113Z" fill="#222"/>
 <!-- tool presets -->
 <path d="M796 138 L805.5 147.5" stroke="#444" stroke-width="1.1"/>
 <path d="M794.5 136.5 l2.5 2.5 M804 146 l2 2" stroke="#333" stroke-width="2"/>
 <path d="M806 136.5 L800 142.5" stroke="#555" stroke-width="1"/>
 <path d="M800 142.5 L795 147.5" stroke="#111" stroke-width="2.6" stroke-linecap="round"/>
 <!-- brushes -->
 <path d="M796.5 174.5 v5.5 h7 v-5.5z" fill="#fff" stroke="#222" stroke-width="1.6"/>
 <path d="M797 173 L795 167.5 M800 173 V166.5 M802.5 173 L805 169" stroke="#333" stroke-width="1.2"/>
 <ellipse cx="805" cy="169" rx="1.8" ry="1.2" fill="#222"/>
 <!-- layer comps -->
 <path d="M794 189.5h5M794 191.5h5M794 193.5h3" stroke="#333" stroke-width="1"/>
 <rect x="799.5" y="188.5" width="5" height="4" fill="#333"/>
 <rect x="795.5" y="195" width="10" height="4.5" fill="#fff" stroke="#222" stroke-width="1.2"/>
 <path d="M798.5 196.3h4l-2 2z" fill="#222"/>
 <!-- paragraph -->
 <path d="M801 220.5 v10 M803 220.5 v10" stroke="#333" stroke-width="1.2"/>
 <path d="M803.5 220.5 h-5 a2.7 2.7 0 0 0 0 5.4 h2.5z" fill="#333"/>
 <!-- character A| -->
 <path d="M795 249 L798.7 239 L802.3 249 M796.3 245.5 h4.8" stroke="#333" stroke-width="1.4" fill="none"/>
 <path d="M803.8 238.5 v11" stroke="#333" stroke-width="1"/>
</svg>

<!-- INFO PANEL -->
<div class="pn" style="left:811px;top:72px;width:186px;height:193px;border-radius:3px 3px 0 0">
 <div class="ph" style="border-radius:3px 3px 0 0"></div><div class="notch"></div>
 <div class="tab" style="left:4px;top:7px;width:37px">导航器</div>
 <div class="tab" style="left:41px;top:7px;width:37px">直方图</div>
 <div class="tab on" style="left:79px;top:7px;width:34px">信息 ×</div>
 <div class="a" style="left:168px;top:5px;width:5px;height:1.5px;background:#888"></div>
 <svg class="a" style="left:177px;top:3px" width="6" height="6"><path d="M0.5 0.5L5.5 5.5M5.5 0.5L0.5 5.5" stroke="#888" stroke-width="1"/></svg>
 <svg class="a" style="left:171px;top:11px" width="15" height="8"><path d="M1.5 3.5h4l-2 2.2z" fill="#222"/><path d="M7 1.5h7M7 4h7M7 6.5h7" stroke="#444" stroke-width="1"/></svg>
 <div class="a" style="left:91px;top:18px;width:1px;height:61px;background:#c8c8c8"></div>
 <div class="a" style="left:0;top:81px;width:186px;height:1px;background:#c8c8c8"></div>
 <div class="a" style="left:91px;top:82px;width:1px;height:25px;background:#c8c8c8"></div>
 <div class="a" style="left:0;top:107px;width:186px;height:1px;background:#c8c8c8"></div>
 <div class="a" style="left:0;top:128px;width:186px;height:1px;background:#c8c8c8"></div>
 <span class="lbl" style="left:18px;top:23px">R :</span>
 <span class="lbl" style="left:18px;top:33px">G :</span>
 <span class="lbl" style="left:18px;top:43px">B :</span>
 <span class="lbl" style="left:11px;top:63px">8 位</span>
 <span class="lbl" style="left:108px;top:23px">C :</span>
 <span class="lbl" style="left:108px;top:33px">M :</span>
 <span class="lbl" style="left:108px;top:43px">Y :</span>
 <span class="lbl" style="left:108px;top:53px">K :</span>
 <span class="lbl" style="left:103px;top:63px">8 位</span>
 <span class="lbl" style="left:18px;top:84px">X :</span>
 <span class="lbl" style="left:18px;top:94px">Y :</span>
 <span class="lbl" style="left:109px;top:84px">W :</span>
 <span class="lbl" style="left:109px;top:94px">H :</span>
 <svg class="a" style="left:6px;top:34px" width="8" height="8"><path d="M1 7L5 3M4 1l3 3" stroke="#222" stroke-width="1.5"/></svg>
 <svg class="a" style="left:97px;top:34px" width="8" height="8"><path d="M1 7L5 3M4 1l3 3" stroke="#222" stroke-width="1.5"/></svg>
 <svg class="a" style="left:6px;top:90px" width="8" height="8"><path d="M3.5 0v7M0 3.5h7" stroke="#222" stroke-width="1"/></svg>
 <svg class="a" style="left:97px;top:89px" width="8" height="8"><path d="M1 1h6v6h-6z" stroke="#222" stroke-width="1" fill="none"/></svg>
 <span class="lbl" style="left:9px;top:116px">文档:1.37M/3.60M</span>
 <span class="lbl" style="left:9px;top:136px">点按并拖移以用渐变填充。要用附加选项，</span>
 <span class="lbl" style="left:9px;top:146px">使用 Shift、Alt 和 Ctrl 键。</span>
</div>
<div class="a" style="left:811px;top:265px;width:186px;height:3px;background:#565656"></div>

<!-- SWATCHES PANEL -->
<div class="pn" style="left:811px;top:268px;width:186px;height:107px;border-radius:3px 3px 0 0">
 <div class="ph" style="border-radius:3px 3px 0 0"></div><div class="notch"></div>
 <div class="tab" style="left:4px;top:6px;width:27px">颜色</div>
 <div class="tab on" style="left:32px;top:6px;width:33px">色板 ×</div>
 <div class="tab" style="left:66px;top:6px;width:28px">路径</div>
 <div class="a" style="left:164px;top:5px;width:5px;height:1.5px;background:#888"></div>
 <svg class="a" style="left:175px;top:3px" width="6" height="6"><path d="M0.5 0.5L5.5 5.5M5.5 0.5L0.5 5.5" stroke="#888" stroke-width="1"/></svg>
 <svg class="a" style="left:171px;top:10px" width="15" height="8"><path d="M1.5 3.5h4l-2 2.2z" fill="#222"/><path d="M7 1.5h7M7 4h7M7 6.5h7" stroke="#444" stroke-width="1"/></svg>
 <div class="a" style="left:1px;top:18px;width:184px;height:75px;background:#f8f8f8"></div>
 <svg class="a" style="left:1.5px;top:18.4px" width="168" height="62"><rect x="0.00" y="0.00" width="8.83" height="8.70" fill="#FF0000"/><rect x="8.78" y="0.00" width="8.83" height="8.70" fill="#FFFF00"/><rect x="17.56" y="0.00" width="8.83" height="8.70" fill="#00FF00"/><rect x="26.34" y="0.00" width="8.83" height="8.70" fill="#00FFFF"/><rect x="35.12" y="0.00" width="8.83" height="8.70" fill="#0000FF"/><rect x="43.90" y="0.00" width="8.83" height="8.70" fill="#FF00FF"/><rect x="52.68" y="0.00" width="8.83" height="8.70" fill="#FFFFFF"/><rect x="61.46" y="0.00" width="8.83" height="8.70" fill="#E4E4E4"/><rect x="70.24" y="0.00" width="8.83" height="8.70" fill="#D9D9D9"/><rect x="79.02" y="0.00" width="8.83" height="8.70" fill="#CDCDCD"/><rect x="87.80" y="0.00" width="8.83" height="8.70" fill="#C2C2C2"/><rect x="96.58" y="0.00" width="8.83" height="8.70" fill="#B7B7B7"/><rect x="105.36" y="0.00" width="8.83" height="8.70" fill="#ACACAC"/><rect x="114.14" y="0.00" width="8.83" height="8.70" fill="#A0A0A0"/><rect x="122.92" y="0.00" width="8.83" height="8.70" fill="#959595"/><rect x="131.70" y="0.00" width="8.83" height="8.70" fill="#8A8A8A"/><rect x="140.48" y="0.00" width="8.83" height="8.70" fill="#ED1C24"/><rect x="149.26" y="0.00" width="8.83" height="8.70" fill="#FFF200"/><rect x="158.04" y="0.00" width="8.83" height="8.70" fill="#00A651"/><rect x="0.00" y="8.65" width="8.83" height="8.70" fill="#00AEEF"/><rect x="8.78" y="8.65" width="8.83" height="8.70" fill="#2E3192"/><rect x="17.56" y="8.65" width="8.83" height="8.70" fill="#EC008C"/><rect x="26.34" y="8.65" width="8.83" height="8.70" fill="#7F7F7F"/><rect x="35.12" y="8.65" width="8.83" height="8.70" fill="#737373"/><rect x="43.90" y="8.65" width="8.83" height="8.70" fill="#676767"/><rect x="52.68" y="8.65" width="8.83" height="8.70" fill="#5A5A5A"/><rect x="61.46" y="8.65" width="8.83" height="8.70" fill="#4E4E4E"/><rect x="70.24" y="8.65" width="8.83" height="8.70" fill="#424242"/><rect x="79.02" y="8.65" width="8.83" height="8.70" fill="#363636"/><rect x="87.80" y="8.65" width="8.83" height="8.70" fill="#292929"/><rect x="96.58" y="8.65" width="8.83" height="8.70" fill="#1D1D1D"/><rect x="105.36" y="8.65" width="8.83" height="8.70" fill="#111111"/><rect x="114.14" y="8.65" width="8.83" height="8.70" fill="#F7977A"/><rect x="122.92" y="8.65" width="8.83" height="8.70" fill="#F9AD81"/><rect x="131.70" y="8.65" width="8.83" height="8.70" fill="#FDC68A"/><rect x="140.48" y="8.65" width="8.83" height="8.70" fill="#FFF79A"/><rect x="149.26" y="8.65" width="8.83" height="8.70" fill="#C4DF9B"/><rect x="158.04" y="8.65" width="8.83" height="8.70" fill="#A3D39C"/><rect x="0.00" y="17.30" width="8.83" height="8.70" fill="#82CA9C"/><rect x="8.78" y="17.30" width="8.83" height="8.70" fill="#7ACCC8"/><rect x="17.56" y="17.30" width="8.83" height="8.70" fill="#6DCFF6"/><rect x="26.34" y="17.30" width="8.83" height="8.70" fill="#7DA7D9"/><rect x="35.12" y="17.30" width="8.83" height="8.70" fill="#8393CA"/><rect x="43.90" y="17.30" width="8.83" height="8.70" fill="#8781BD"/><rect x="52.68" y="17.30" width="8.83" height="8.70" fill="#A186BE"/><rect x="61.46" y="17.30" width="8.83" height="8.70" fill="#BC8DBF"/><rect x="70.24" y="17.30" width="8.83" height="8.70" fill="#F49AC1"/><rect x="79.02" y="17.30" width="8.83" height="8.70" fill="#F5989D"/><rect x="87.80" y="17.30" width="8.83" height="8.70" fill="#F26C4F"/><rect x="96.58" y="17.30" width="8.83" height="8.70" fill="#F68E56"/><rect x="105.36" y="17.30" width="8.83" height="8.70" fill="#FBAF5D"/><rect x="114.14" y="17.30" width="8.83" height="8.70" fill="#FFF568"/><rect x="122.92" y="17.30" width="8.83" height="8.70" fill="#ACD373"/><rect x="131.70" y="17.30" width="8.83" height="8.70" fill="#7CC576"/><rect x="140.48" y="17.30" width="8.83" height="8.70" fill="#3BB878"/><rect x="149.26" y="17.30" width="8.83" height="8.70" fill="#1ABBB4"/><rect x="158.04" y="17.30" width="8.83" height="8.70" fill="#00BFF3"/><rect x="0.00" y="25.95" width="8.83" height="8.70" fill="#438CCA"/><rect x="8.78" y="25.95" width="8.83" height="8.70" fill="#5574B9"/><rect x="17.56" y="25.95" width="8.83" height="8.70" fill="#605CA8"/><rect x="26.34" y="25.95" width="8.83" height="8.70" fill="#855FA8"/><rect x="35.12" y="25.95" width="8.83" height="8.70" fill="#A763A8"/><rect x="43.90" y="25.95" width="8.83" height="8.70" fill="#F06EAA"/><rect x="52.68" y="25.95" width="8.83" height="8.70" fill="#F26D7D"/><rect x="61.46" y="25.95" width="8.83" height="8.70" fill="#ED1C24"/><rect x="70.24" y="25.95" width="8.83" height="8.70" fill="#F26522"/><rect x="79.02" y="25.95" width="8.83" height="8.70" fill="#F7941D"/><rect x="87.80" y="25.95" width="8.83" height="8.70" fill="#FFF200"/><rect x="96.58" y="25.95" width="8.83" height="8.70" fill="#8DC63F"/><rect x="105.36" y="25.95" width="8.83" height="8.70" fill="#39B54A"/><rect x="114.14" y="25.95" width="8.83" height="8.70" fill="#00A651"/><rect x="122.92" y="25.95" width="8.83" height="8.70" fill="#00A99D"/><rect x="131.70" y="25.95" width="8.83" height="8.70" fill="#00AEEF"/><rect x="140.48" y="25.95" width="8.83" height="8.70" fill="#0072BC"/><rect x="149.26" y="25.95" width="8.83" height="8.70" fill="#0054A6"/><rect x="158.04" y="25.95" width="8.83" height="8.70" fill="#2E3192"/><rect x="0.00" y="34.60" width="8.83" height="8.70" fill="#662D91"/><rect x="8.78" y="34.60" width="8.83" height="8.70" fill="#92278F"/><rect x="17.56" y="34.60" width="8.83" height="8.70" fill="#EC008C"/><rect x="26.34" y="34.60" width="8.83" height="8.70" fill="#ED145B"/><rect x="35.12" y="34.60" width="8.83" height="8.70" fill="#9E0B0F"/><rect x="43.90" y="34.60" width="8.83" height="8.70" fill="#A0410D"/><rect x="52.68" y="34.60" width="8.83" height="8.70" fill="#A36209"/><rect x="61.46" y="34.60" width="8.83" height="8.70" fill="#ABA000"/><rect x="70.24" y="34.60" width="8.83" height="8.70" fill="#598527"/><rect x="79.02" y="34.60" width="8.83" height="8.70" fill="#197B30"/><rect x="87.80" y="34.60" width="8.83" height="8.70" fill="#007236"/><rect x="96.58" y="34.60" width="8.83" height="8.70" fill="#00746B"/><rect x="105.36" y="34.60" width="8.83" height="8.70" fill="#0076A3"/><rect x="114.14" y="34.60" width="8.83" height="8.70" fill="#004B80"/><rect x="122.92" y="34.60" width="8.83" height="8.70" fill="#003471"/><rect x="131.70" y="34.60" width="8.83" height="8.70" fill="#1B1464"/><rect x="140.48" y="34.60" width="8.83" height="8.70" fill="#440E62"/><rect x="149.26" y="34.60" width="8.83" height="8.70" fill="#630460"/><rect x="158.04" y="34.60" width="8.83" height="8.70" fill="#9E005D"/><rect x="0.00" y="43.25" width="8.83" height="8.70" fill="#9E0039"/><rect x="8.78" y="43.25" width="8.83" height="8.70" fill="#790000"/><rect x="17.56" y="43.25" width="8.83" height="8.70" fill="#7B2E00"/><rect x="26.34" y="43.25" width="8.83" height="8.70" fill="#7D4900"/><rect x="35.12" y="43.25" width="8.83" height="8.70" fill="#827B00"/><rect x="43.90" y="43.25" width="8.83" height="8.70" fill="#406618"/><rect x="52.68" y="43.25" width="8.83" height="8.70" fill="#005E20"/><rect x="61.46" y="43.25" width="8.83" height="8.70" fill="#005826"/><rect x="70.24" y="43.25" width="8.83" height="8.70" fill="#005952"/><rect x="79.02" y="43.25" width="8.83" height="8.70" fill="#00585A"/><rect x="87.80" y="43.25" width="8.83" height="8.70" fill="#00345E"/><rect x="96.58" y="43.25" width="8.83" height="8.70" fill="#002157"/><rect x="105.36" y="43.25" width="8.83" height="8.70" fill="#0D004C"/><rect x="114.14" y="43.25" width="8.83" height="8.70" fill="#32004B"/><rect x="122.92" y="43.25" width="8.83" height="8.70" fill="#4B0049"/><rect x="131.70" y="43.25" width="8.83" height="8.70" fill="#7B0046"/><rect x="140.48" y="43.25" width="8.83" height="8.70" fill="#7A0026"/><rect x="149.26" y="43.25" width="8.83" height="8.70" fill="#C7B299"/><rect x="158.04" y="43.25" width="8.83" height="8.70" fill="#998675"/><rect x="0.00" y="51.90" width="8.83" height="8.70" fill="#736357"/><rect x="8.78" y="51.90" width="8.83" height="8.70" fill="#534741"/><rect x="17.56" y="51.90" width="8.83" height="8.70" fill="#362F2D"/><rect x="26.34" y="51.90" width="8.83" height="8.70" fill="#C69C6D"/><rect x="35.12" y="51.90" width="8.83" height="8.70" fill="#A67C52"/><rect x="43.90" y="51.90" width="8.83" height="8.70" fill="#8C6239"/><rect x="52.68" y="51.90" width="8.83" height="8.70" fill="#754C24"/><rect x="61.46" y="51.90" width="8.83" height="8.70" fill="#603913"/><path d="M0.00 0V60.55M8.78 0V60.55M17.56 0V60.55M26.34 0V60.55M35.12 0V60.55M43.90 0V60.55M52.68 0V60.55M61.46 0V60.55M70.24 0V60.55M79.02 0V51.90M87.80 0V51.90M96.58 0V51.90M105.36 0V51.90M114.14 0V51.90M122.92 0V51.90M131.70 0V51.90M140.48 0V51.90M149.26 0V51.90M158.04 0V51.90M166.82 0V51.90M0 0.00H166.82M0 8.65H166.82M0 17.30H166.82M0 25.95H166.82M0 34.60H166.82M0 43.25H166.82M0 51.90H166.82M0 60.55H70.24" stroke="#222" stroke-width="0.8" opacity="0.8"/></svg>
 <div class="a" style="left:173px;top:18px;width:12px;height:75px;background:#f4f4f4;border-left:1px solid #e0e0e0"></div>
 <svg class="a" style="left:174px;top:22px" width="10" height="6"><path d="M1.5 5L5 1.5L8.5 5" stroke="#c8c8c8" stroke-width="1.3" fill="none"/></svg>
 <svg class="a" style="left:174px;top:84px" width="10" height="6"><path d="M1.5 1L5 4.5L8.5 1" stroke="#c8c8c8" stroke-width="1.3" fill="none"/></svg>
 <div class="a" style="left:0;top:93px;width:186px;height:1px;background:#d0d0d0"></div>
 <svg class="a" style="left:138px;top:95px" width="48" height="12"><path d="M3 3h6v6h-6z" fill="#fff" stroke="#333"/><path d="M5 6h3v3" stroke="#333" fill="none"/><path d="M25 3h6l-1 7h-4z" fill="#ddd" stroke="#555" stroke-width="0.8"/><path d="M38 10l6-6v6z" fill="#ccc"/></svg>
</div>
<div class="a" style="left:811px;top:375px;width:186px;height:3px;background:#565656"></div>
<!-- LAYERS PANEL -->
<div class="pn" style="left:811px;top:378px;width:186px;height:90px;border-radius:3px 3px 0 0">
 <div class="ph" style="border-radius:3px 3px 0 0"></div><div class="notch"></div>
 <div class="tab on" style="left:4px;top:6px;width:34px">图层 ×</div>
 <div class="tab" style="left:39px;top:6px;width:29px">通道</div>
 <div class="a" style="left:166px;top:5px;width:5px;height:1.5px;background:#888"></div>
 <svg class="a" style="left:176px;top:3px" width="6" height="6"><path d="M0.5 0.5L5.5 5.5M5.5 0.5L0.5 5.5" stroke="#888" stroke-width="1"/></svg>
 <svg class="a" style="left:171px;top:10px" width="15" height="8"><path d="M1.5 3.5h4l-2 2.2z" fill="#222"/><path d="M7 1.5h7M7 4h7M7 6.5h7" stroke="#444" stroke-width="1"/></svg>
 <div class="a" style="left:4px;top:20px;width:66px;height:15px;border:1px solid #b8c3d8;background:#fff">
  <span class="a" style="left:5px;top:2px;font-size:9.5px">正常</span>
  <div class="a" style="right:0;top:0;width:11px;height:13px;background:linear-gradient(#d6e2f8,#b8cdf2)"><svg class="a" style="left:2px;top:4px" width="7" height="5"><path d="M0.5 0.5L3.5 3.5L6.5 0.5" stroke="#3a4f8a" stroke-width="1.5" fill="none"/></svg></div>
 </div>
 <span class="lbl" style="left:73px;top:23px;font-size:9px">不透明度:</span>
 <div class="a" style="left:112px;top:20px;width:42px;height:15px;border:1px solid #c3cad8;background:#fff">
  <span class="a" style="left:2px;top:2px;font-size:9px">100%</span>
  <div class="a" style="right:0;top:0;width:11px;height:13px;background:linear-gradient(#d9e4f8,#b9cdf0)"><div class="a" style="left:4px;top:4px;width:0;height:0;border-top:2.5px solid transparent;border-bottom:2.5px solid transparent;border-left:3px solid #333"></div></div>
 </div>
 <div class="a" style="left:0;top:39px;width:186px;height:1px;background:#d0d0d0"></div>
 <span class="lbl" style="left:6px;top:43px;font-size:9px">锁定:</span>
 <svg class="a" style="left:30px;top:42px" width="48" height="11"><path d="M1.5 1.5h8v8h-8z" stroke="#555" fill="#fff" stroke-dasharray="1 1"/><path d="M14 10l6-8" stroke="#555" stroke-width="1.6"/><path d="M29 1v9M24.5 5.5h9" stroke="#333" stroke-width="1.2"/><path d="M39 5h6v5h-6z" fill="#222"/><path d="M40 5v-2a2 2 0 0 1 4 0v2" stroke="#222" fill="none"/></svg>
 <span class="lbl" style="left:89px;top:43px;font-size:9px">填充:</span>
 <div class="a" style="left:112px;top:40px;width:42px;height:15px;border:1px solid #c3cad8;background:#fff">
  <span class="a" style="left:2px;top:2px;font-size:9px">100%</span>
  <div class="a" style="right:0;top:0;width:11px;height:13px;background:linear-gradient(#d9e4f8,#b9cdf0)"><div class="a" style="left:4px;top:4px;width:0;height:0;border-top:2.5px solid transparent;border-bottom:2.5px solid transparent;border-left:3px solid #333"></div></div>
 </div>
 <div class="a" style="left:0;top:57px;width:186px;height:1px;background:#d0d0d0"></div>
 <div class="a" style="left:18px;top:58px;width:149px;height:22px;background:#3168c8"></div>
 <svg class="a" style="left:4px;top:64px" width="12" height="8"><path d="M1 4Q6 -1 11 4Q6 9 1 4z" fill="#333"/><circle cx="6" cy="4" r="1.5" fill="#999"/></svg>
 <div class="a" style="left:20px;top:59px;width:25px;height:20px;background:#fff;border:1px solid #333;background-image:linear-gradient(45deg,#ddd 25%,transparent 25%,transparent 75%,#ddd 75%),linear-gradient(45deg,#ddd 25%,transparent 25%,transparent 75%,#ddd 75%);background-size:6px 6px;background-position:0 0,3px 3px"></div>
 <div class="a" style="left:32px;top:61px;width:14px;height:16px;border-radius:50%;background:rgba(255,255,255,.75)"></div>
 <div class="a" style="left:47px;top:60px;width:16px;height:18px;border-radius:50%;background:rgba(200,220,255,.55)"></div>
 <span class="lbl" style="left:52px;top:64px;font-size:9.5px;color:#fff">图层 4</span>
 <span class="lbl" style="left:153px;top:63px;font:italic 10px 'Liberation Serif',serif;color:#111">fx</span>
 <div class="a" style="left:163px;top:68px;width:0;height:0;border-left:2px solid transparent;border-right:2px solid transparent;border-bottom:3px solid #222"></div>
 <div class="a" style="left:167px;top:58px;width:18px;height:27px;background:#f0f0f0;border-left:1px solid #ddd"></div>
 <div class="a" style="left:168px;top:59px;width:14px;height:12px;background:linear-gradient(#e8f0ff,#cad9f6);border:1px solid #a8bde8"></div>
 <svg class="a" style="left:169px;top:61px" width="12" height="8"><path d="M2 6L6 2L10 6" stroke="#2a4a9a" stroke-width="1.6" fill="none"/></svg>
 <div class="a" style="left:0;top:80px;width:167px;height:10px;background:#f2f2f2"></div>
 <div class="a" style="left:47px;top:78px;width:14px;height:14px;border-radius:50%;background:rgba(220,235,255,.8)"></div>
</div>
</body></html>
